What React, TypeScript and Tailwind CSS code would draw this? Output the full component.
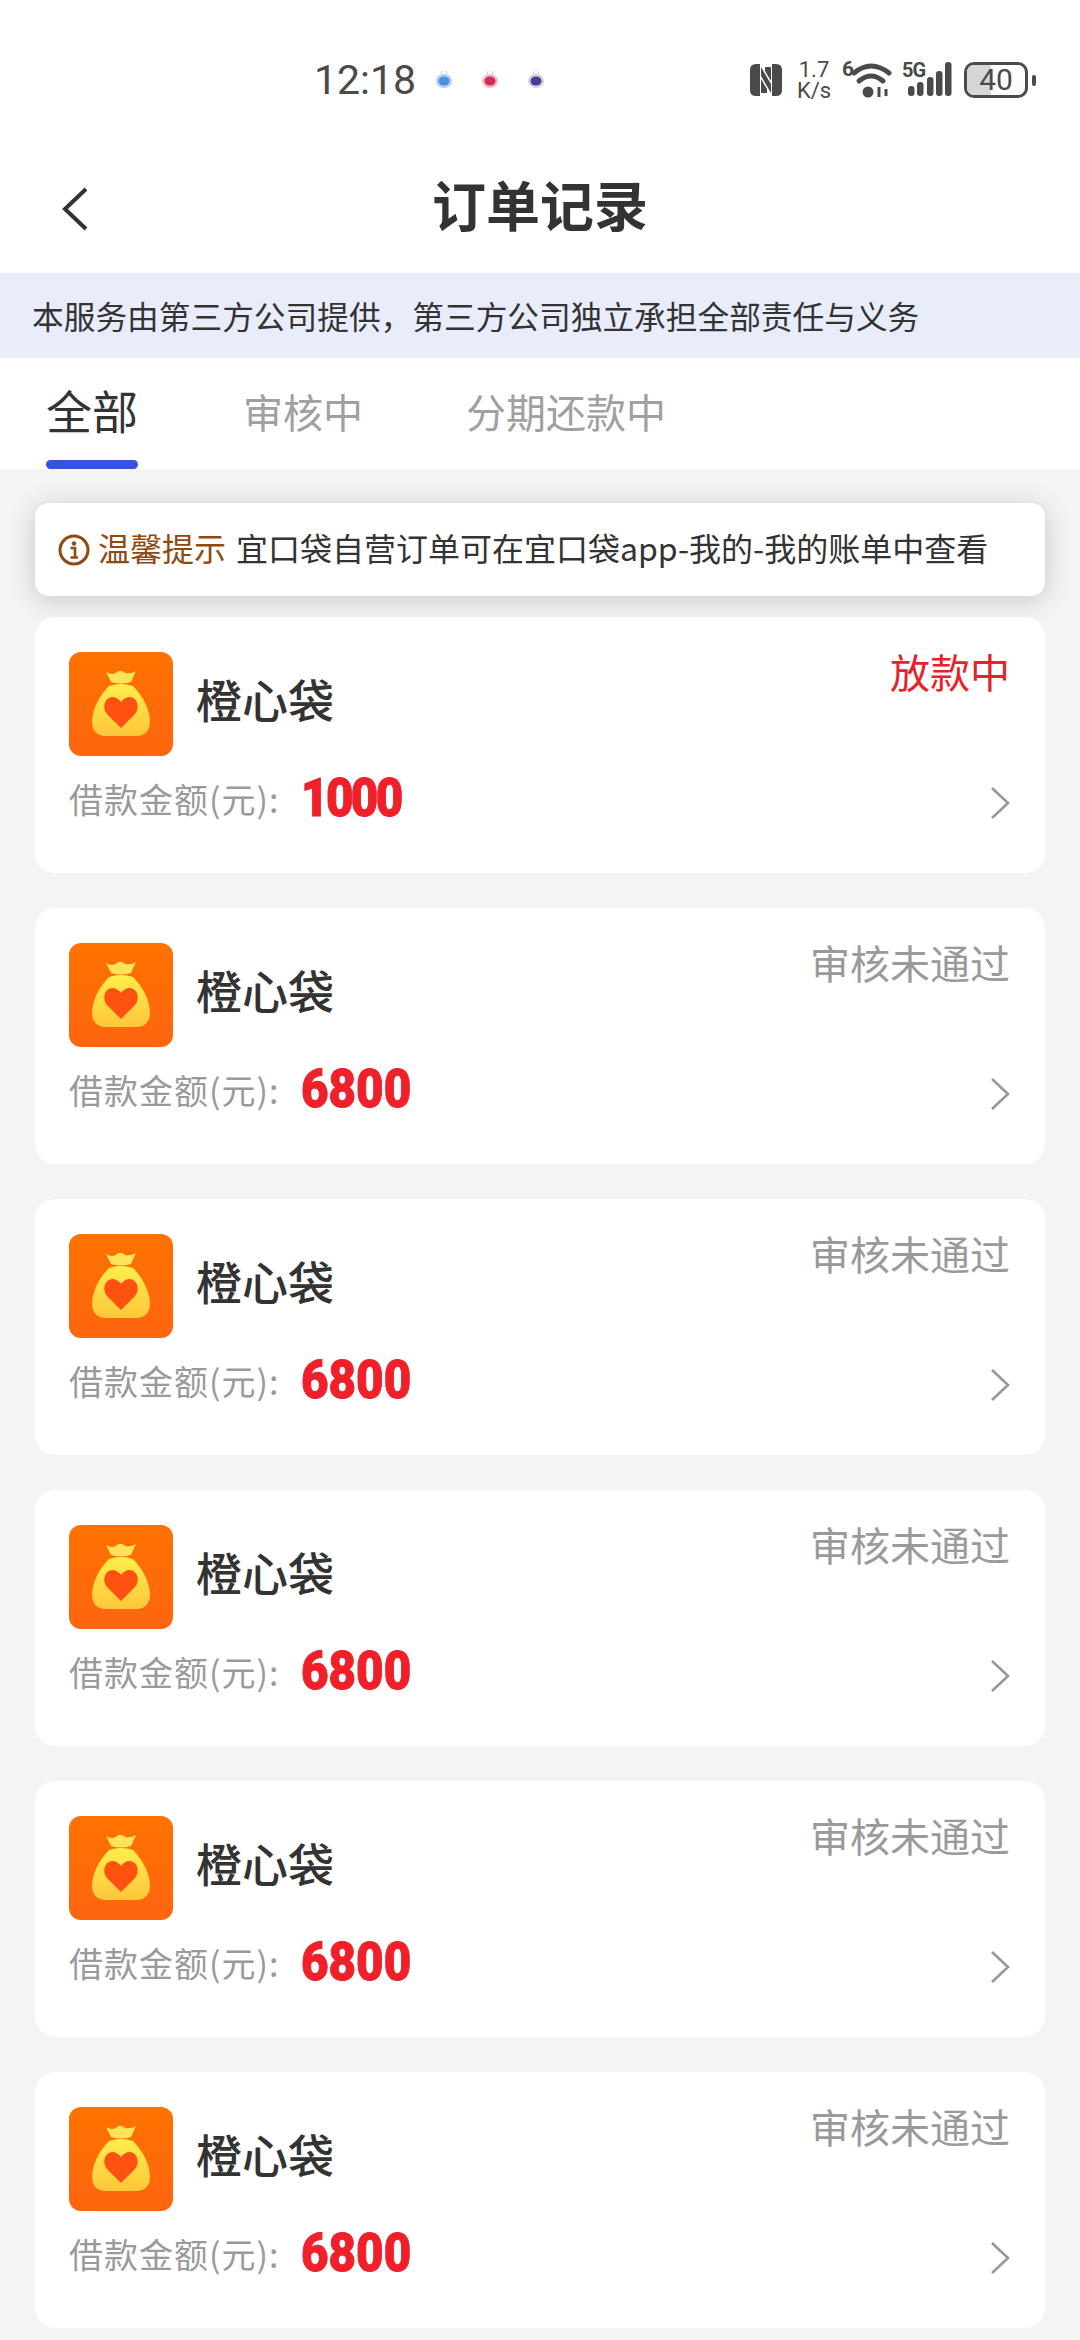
const cjk = "font-['Noto_Sans_CJK_SC','Noto_Sans',sans-serif]";

interface Order {
  id: number;
  amount: string;
  status: string;
  active?: boolean;
}

const orders: Order[] = [
  { id: 1, amount: "1000", status: "放款中", active: true },
  { id: 2, amount: "6800", status: "审核未通过" },
  { id: 3, amount: "6800", status: "审核未通过" },
  { id: 4, amount: "6800", status: "审核未通过" },
  { id: 5, amount: "6800", status: "审核未通过" },
  { id: 6, amount: "6800", status: "审核未通过" },
];

function BagIcon({ id }: { id: number }) {
  return (
    <svg width="104" height="104" viewBox="0 0 104 104" className="shrink-0">
      <defs>
        <linearGradient id={`bagBg${id}`} x1="0" y1="0" x2="0" y2="1">
          <stop offset="0" stopColor="#ff7200" />
          <stop offset="1" stopColor="#ff6510" />
        </linearGradient>
        <linearGradient id={`bagBody${id}`} x1="0" y1="0" x2="0" y2="1">
          <stop offset="0" stopColor="#ffee4c" />
          <stop offset="1" stopColor="#ffc63a" />
        </linearGradient>
      </defs>
      <rect width="104" height="104" rx="12" fill={`url(#bagBg${id})`} />
      <path d="M37 20 Q44 24 48 20 Q52 17 56 21 Q62 22 67 19 L62 30 Q52 33 42 30 Z" fill="#ffe35a" />
      <path
        d="M40 34 Q52 30 64 34 C74 44 81 58 81 70 C81 79 75 84 68 84 H36 C29 84 23 79 23 70 C23 58 30 44 40 34 Z"
        fill={`url(#bagBody${id})`}
      />
      <path
        d="M52 76 L38 62 C33 56 35 46 43 45 C47 45 50 47 52 50 C54 47 57 45 61 45 C69 46 71 56 66 62 Z"
        fill="#ff5210"
      />
    </svg>
  );
}

function NotifyDot({ ring, fill }: { ring: string; fill: string }) {
  return (
    <svg width="18" height="20" viewBox="0 0 18 20">
      <path d="M6 4 L7 1 M12 4 L11 1" stroke="#c9c9d6" strokeWidth="1" />
      <ellipse cx="9" cy="11" rx="8" ry="7" fill={ring} opacity="0.6" />
      <ellipse cx="9" cy="11" rx="5.5" ry="4.5" fill={fill} />
    </svg>
  );
}

function StatusBar() {
  return (
    <div className="h-[130px] flex items-center pt-[30px] pl-[314px] pr-[44px] text-[#4a4a4a]">
      <span className="font-['Roboto',sans-serif] text-[41px] leading-none w-[121px]">12:18</span>
      <div className="flex items-center gap-[28px]">
        <NotifyDot ring="#7fb0ea" fill="#4a90e0" />
        <NotifyDot ring="#e58aa0" fill="#d42a55" />
        <NotifyDot ring="#b4b0c8" fill="#4b3a96" />
      </div>
      <div className="ml-auto flex items-center h-[40px]">
        <svg width="32" height="32" viewBox="0 0 32 32">
          <path
            d="M6 0 H10 V32 H6 Q0 32 0 26 V6 Q0 0 6 0 Z M22 0 H26 Q32 0 32 6 V26 Q32 32 26 32 H22 Z"
            fill="#4a4a4a"
          />
          <path d="M11 3 L21 20 V29 L11 12 Z M11 15 L17 25 V29 H11 Z M21 17 L15 7 V3 H21 Z" fill="#4a4a4a" />
        </svg>
        <div className="ml-[14px] w-[36px] flex flex-col items-center font-['Roboto',sans-serif] text-[22px] leading-[21px]">
          <span>1.7</span>
          <span>K/s</span>
        </div>
        <div className="relative ml-[10px] w-[50px] h-[36px]">
          <span className="absolute left-0 top-[-4px] font-['Roboto',sans-serif] font-bold text-[21px] leading-[22px]">6</span>
          <svg width="50" height="36" viewBox="0 0 50 36" fill="none" stroke="#4a4a4a" strokeLinecap="round">
            <path d="M12 11 Q29 -3 47 11" strokeWidth="5" />
            <path d="M17 19 Q29 9 41 19" strokeWidth="5" />
            <circle cx="26" cy="30" r="5.5" fill="#4a4a4a" stroke="none" />
            <path d="M37 25 V35 M44 27 V34" strokeWidth="3" strokeLinecap="butt" />
          </svg>
        </div>
        <div className="relative ml-[10px] w-[50px] h-[36px]">
          <span className="absolute left-0 top-[-3px] font-['Roboto',sans-serif] font-bold text-[20px] leading-[22px] tracking-[-1px]">5G</span>
          <svg width="50" height="36" viewBox="0 0 50 36" fill="#4a4a4a">
            <rect x="6" y="24" width="6.5" height="10" rx="3" />
            <rect x="15" y="20" width="6.5" height="14" rx="3" />
            <rect x="25" y="15" width="6.5" height="19" rx="3" />
            <rect x="34" y="9" width="6.5" height="25" rx="3" />
            <rect x="43" y="0" width="6.5" height="34" rx="3" />
          </svg>
        </div>
        <div className="relative ml-[12px] w-[64px] h-[36px] rounded-[10px] border-[3px] border-[#4a4a4a] overflow-hidden flex items-center justify-center">
          <div className="absolute left-0 top-0 bottom-0 w-[24px] bg-[#d6d6d6]" />
          <span className="relative font-['Roboto',sans-serif] text-[30px] leading-none">40</span>
        </div>
        <div className="ml-[4px] w-[4px] h-[11px] rounded-[2px] bg-[#4a4a4a]" />
      </div>
    </div>
  );
}

function OrderCard({ order }: { order: Order }) {
  return (
    <div className="h-[256px] rounded-[20px] bg-white pt-[35px] pl-[34px] pr-[35px]">
      <div className="flex h-[104px] items-start">
        <BagIcon id={order.id} />
        <span className="ml-[23px] mt-[-12px] self-center text-[46px] leading-none font-medium text-[#333333]">橙心袋</span>
        <span
          className={`ml-auto mt-[-3px] text-[40px] leading-[44px] ${order.active ? "text-[#e8222a]" : "text-[#9a9a9a]"}`}
        >
          {order.status}
        </span>
      </div>
      <div className="flex h-[84px] items-center pt-[2px]">
        <span className="text-[34px] leading-none tracking-[1px] text-[#9a9a9a] w-[232px]">借款金额(元):</span>
        <span
          className={`inline-block origin-left scale-x-[0.88] mt-[-3px] [-webkit-text-stroke:1px_#f0202a] font-['Roboto',sans-serif] text-[54px] leading-none font-black text-[#f0202a] ${
            order.active ? "tracking-[-3px]" : "tracking-[0px]"
          }`}
        >
          {order.amount}
        </span>
        <svg width="20" height="34" viewBox="0 0 20 34" fill="none" className="ml-auto mt-[8px]">
          <path d="M2 2 L18 17 L2 32" stroke="#999999" strokeWidth="2.6" />
        </svg>
      </div>
    </div>
  );
}

export default function App() {
  return (
    <div className={`w-[1080px] h-[2340px] overflow-hidden bg-[#f4f4f4] ${cjk}`}>
      <div className="bg-white">
        <StatusBar />
        <div className="relative h-[143px] flex items-center justify-center">
          <svg width="28" height="44" viewBox="0 0 28 44" fill="none" className="absolute left-[61px] top-[57px]">
            <path d="M25 2 L4 22 L25 42" stroke="#333333" strokeWidth="4" />
          </svg>
          <h1 className="text-[54px] leading-none font-bold text-[#333333] mt-[5px]">订单记录</h1>
        </div>
        <div className="h-[85px] flex items-center pl-[32px] bg-[#e9edfb] text-[31.7px] text-[#333333]">
          本服务由第三方公司提供，第三方公司独立承担全部责任与义务
        </div>
        <div className="h-[111px] flex pl-[46px] items-start pt-[24px] text-[40px] leading-[54px] text-[#a0a0a0]">
          <div className="relative w-[92px] text-[46px] text-[#333333] whitespace-nowrap">
            全部
            <div className="absolute left-0 top-[78px] w-[92px] h-[9px] rounded-[5px] bg-[#3553e0]" />
          </div>
          <span className="ml-[105px] mt-[2px]">审核中</span>
          <span className="ml-[103px] mt-[2px]">分期还款中</span>
        </div>
      </div>
      <div className="pt-[34px] px-[35px]">
        <div className="h-[93px] flex items-center pl-[23px] rounded-[14px] bg-white shadow-[0_4px_28px_rgba(0,0,0,0.18)] text-[32px] text-[#333333]">
          <svg width="32" height="32" viewBox="0 0 32 32" fill="none" className="shrink-0">
            <circle cx="16" cy="16" r="14" stroke="#8f4a12" strokeWidth="3" />
            <circle cx="16" cy="9.5" r="2.2" fill="#8f4a12" />
            <path d="M12.5 14 H17 V23 M12.5 23.5 H20" stroke="#8f4a12" strokeWidth="2.6" />
          </svg>
          <span className="ml-[8px] mt-[-5px] text-[#8f4a12]">温馨提示</span>
          <span className="ml-[10px] mt-[-5px]">宜口袋自营订单可在宜口袋app-我的-我的账单中查看</span>
        </div>
        <div className="mt-[21px] flex flex-col gap-[35px]">
          {orders.map((order) => (
            <OrderCard key={order.id} order={order} />
          ))}
        </div>
      </div>
    </div>
  );
}
